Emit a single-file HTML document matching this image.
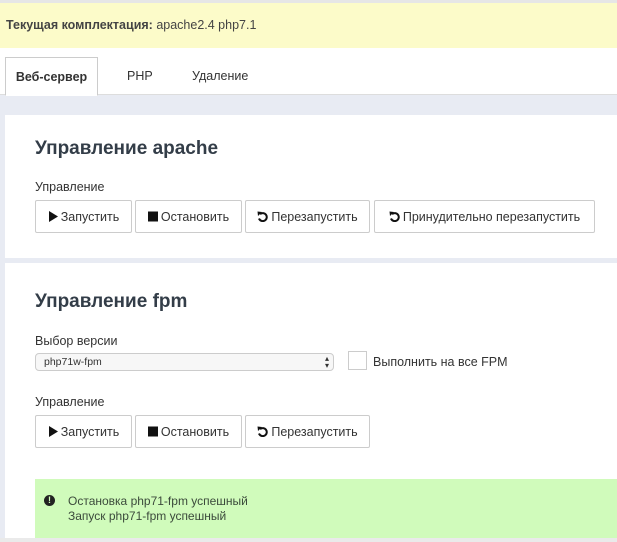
<!DOCTYPE html>
<html><head><meta charset="utf-8"><style>
*{box-sizing:border-box;margin:0;padding:0}
body{width:617px;height:542px;overflow:hidden;background:#e8ebf3;font-family:"Liberation Sans",sans-serif;color:#333;position:relative}
.abs{position:absolute}
.top{left:0;top:0;width:617px;height:48px;background:#fcfbc9;border-top:3px solid #e6e6e6;font-size:12.5px;padding:15px 0 0 6px;color:#444}
.tabs{left:0;top:48px;width:617px;height:47px;background:#fff;border-bottom:1px solid #ddd}
.tab{position:absolute;top:9px;height:38px;font-size:12.5px;padding-top:12px}
.card{background:#fff;left:5px;width:612px}
h2{position:absolute;font-size:19px;color:#333d48;font-weight:bold}
.lbl{position:absolute;font-size:12.5px;color:#333}
.btn{position:absolute;height:33px;border:1px solid #ccc;border-radius:2px;background:#fff;font-size:12.5px;color:#333;display:flex;align-items:center;justify-content:center;gap:3px}
.btn svg{display:block}
</style></head><body>
<div class="abs top"><b>Текущая комплектация:</b> apache2.4 php7.1</div>
<div class="abs tabs">
 <div class="tab" style="left:5px;width:93px;border:1px solid #ccc;border-bottom:1px solid #fff;background:#fff;text-align:center;font-weight:bold;height:39px">Веб-сервер</div>
 <div class="tab" style="left:127px">PHP</div>
 <div class="tab" style="left:192px">Удаление</div>
</div>
<div class="abs card" style="top:115px;height:143px"></div>
<div class="abs card" style="top:263px;height:275px"></div>
<div class="abs" style="left:0;top:538px;width:617px;height:4px;background:#eaeaea"></div>
<h2 style="left:35px;top:138px">Управление apache</h2>
<div class="lbl" style="left:35px;top:180px">Управление</div>
<div class="btn" style="left:35px;top:200px;width:97px"><svg width="10" height="11"><path d="M1 0L10 5.5L1 11Z" fill="#111"/></svg>Запустить</div>
<div class="btn" style="left:135px;top:200px;width:107px"><svg width="10" height="11"><rect y="0.5" width="10" height="10" fill="#111"/></svg>Остановить</div>
<div class="btn" style="left:245px;top:200px;width:125px"><svg width="11" height="11" viewBox="0 0 11 11"><path d="M3 3.2A4 4 0 1 1 2 7.5" fill="none" stroke="#111" stroke-width="2"/><path d="M0.5 0.5L5 1L1 5Z" fill="#111"/></svg>Перезапустить</div>
<div class="btn" style="left:374px;top:200px;width:221px"><svg width="11" height="11" viewBox="0 0 11 11"><path d="M3 3.2A4 4 0 1 1 2 7.5" fill="none" stroke="#111" stroke-width="2"/><path d="M0.5 0.5L5 1L1 5Z" fill="#111"/></svg>Принудительно перезапустить</div>
<h2 style="left:35px;top:291px">Управление fpm</h2>
<div class="lbl" style="left:35px;top:334px">Выбор версии</div>
<div class="abs" style="left:35px;top:353px;width:299px;height:18px;border:1px solid #ccc;border-radius:4px;background:#f7f7f7;font-size:10.5px;padding:2px 0 0 8px;color:#333">php71w-fpm<span style="position:absolute;right:4px;top:1px;font-size:8px;line-height:7px">▴<br>▾</span></div>
<div class="abs" style="left:348px;top:351px;width:19px;height:19px;border:1px solid #ccc;background:#fff"></div>
<div class="lbl" style="left:373px;top:355px">Выполнить на все FPM</div>
<div class="lbl" style="left:35px;top:395px">Управление</div>
<div class="btn" style="left:35px;top:415px;width:97px"><svg width="10" height="11"><path d="M1 0L10 5.5L1 11Z" fill="#111"/></svg>Запустить</div>
<div class="btn" style="left:135px;top:415px;width:107px"><svg width="10" height="11"><rect y="0.5" width="10" height="10" fill="#111"/></svg>Остановить</div>
<div class="btn" style="left:245px;top:415px;width:125px"><svg width="11" height="11" viewBox="0 0 11 11"><path d="M3 3.2A4 4 0 1 1 2 7.5" fill="none" stroke="#111" stroke-width="2"/><path d="M0.5 0.5L5 1L1 5Z" fill="#111"/></svg>Перезапустить</div>
<div class="abs" style="left:35px;top:479px;width:582px;height:59px;background:#d0fbbb;font-size:12px;color:#3b4a3b;padding:15px 0 0 33px;line-height:15px">
<span style="position:absolute;left:9px;top:16px;width:11px;height:11px;border-radius:50%;background:#222;color:#d0fbbb;font-size:9px;line-height:11px;text-align:center;font-weight:bold">!</span>
Остановка php71-fpm успешный<br>Запуск php71-fpm успешный</div>
</body></html>
